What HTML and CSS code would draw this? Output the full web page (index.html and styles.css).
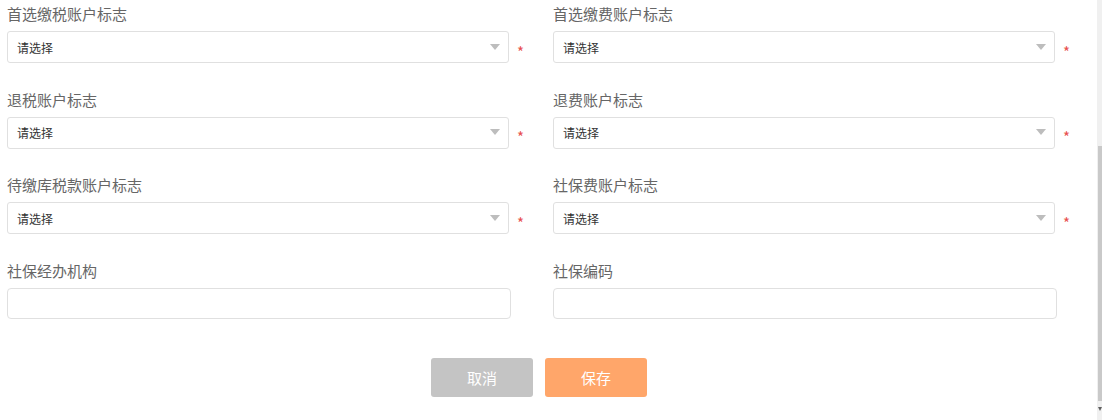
FILE: index.html
```html
<!DOCTYPE html>
<html lang="zh">
<head>
<meta charset="utf-8">
<title>账户标志</title>
<link rel="stylesheet" href="styles.css">
</head>
<body>
<div class="page">
  <form class="form">
    <div class="grid">
      <div class="field">
        <div class="label">首选缴税账户标志</div>
        <div class="control-row">
          <div class="select"><span>请选择</span><i class="arrow"></i></div>
          <span class="req">*</span>
        </div>
      </div>
      <div class="field">
        <div class="label">首选缴费账户标志</div>
        <div class="control-row">
          <div class="select"><span>请选择</span><i class="arrow"></i></div>
          <span class="req">*</span>
        </div>
      </div>
      <div class="field">
        <div class="label">退税账户标志</div>
        <div class="control-row">
          <div class="select"><span>请选择</span><i class="arrow"></i></div>
          <span class="req">*</span>
        </div>
      </div>
      <div class="field">
        <div class="label">退费账户标志</div>
        <div class="control-row">
          <div class="select"><span>请选择</span><i class="arrow"></i></div>
          <span class="req">*</span>
        </div>
      </div>
      <div class="field">
        <div class="label">待缴库税款账户标志</div>
        <div class="control-row">
          <div class="select"><span>请选择</span><i class="arrow"></i></div>
          <span class="req">*</span>
        </div>
      </div>
      <div class="field">
        <div class="label">社保费账户标志</div>
        <div class="control-row">
          <div class="select"><span>请选择</span><i class="arrow"></i></div>
          <span class="req">*</span>
        </div>
      </div>
      <div class="field">
        <div class="label">社保经办机构</div>
        <div class="control-row">
          <input class="input" type="text">
        </div>
      </div>
      <div class="field">
        <div class="label">社保编码</div>
        <div class="control-row">
          <input class="input" type="text">
        </div>
      </div>
    </div>
    <div class="actions">
      <button type="button" class="btn btn-cancel">取消</button>
      <button type="button" class="btn btn-save">保存</button>
    </div>
  </form>
  <div class="scrollbar"><div class="thumb"></div><div class="down"></div></div>
</div>
</body>
</html>
```
FILE: styles.css
```css
html, body {
  margin: 0;
  padding: 0;
  background: #fff;
}
body {
  font-family: "Noto Sans CJK SC", "Liberation Sans", sans-serif;
  width: 1102px;
  height: 420px;
  overflow: hidden;
}
.page {
  position: relative;
  width: 1102px;
  height: 420px;
}
.form {
  padding: 4px 0 0 7px;
}
.grid {
  display: grid;
  grid-template-columns: 546px 546px;
}
.field {
  height: 85.5px;
}
.label {
  height: 20px;
  line-height: 20px;
  font-size: 15px;
  color: #666;
  margin-bottom: 7px;
}
.control-row {
  display: flex;
  align-items: center;
}
.select {
  box-sizing: border-box;
  width: 502px;
  height: 32px;
  border: 1px solid #e0e0e0;
  border-radius: 3px;
  display: flex;
  align-items: center;
  justify-content: space-between;
  padding: 0 8px 0 9px;
  font-size: 12px;
  color: #333;
}
.arrow {
  width: 0;
  height: 0;
  border-left: 5.5px solid transparent;
  border-right: 5.5px solid transparent;
  border-top: 6px solid #bdbdbd;
  margin-top: -1px;
}
.req {
  color: #e84f4f;
  font-size: 15px;
  margin-left: 8px;
  margin-top: 8px;
  line-height: 1;
}
.input {
  box-sizing: border-box;
  width: 504px;
  height: 31px;
  border: 1px solid #e0e0e0;
  border-radius: 4px;
  margin: 0;
  outline: none;
}
.actions {
  display: flex;
  justify-content: center;
  gap: 12px;
  padding-right: 31px;
  margin-top: 12px;
}
.btn {
  width: 102px;
  height: 39px;
  border: none;
  border-radius: 3px;
  color: #fff;
  font-size: 15px;
  font-family: "Noto Sans CJK SC", "Liberation Sans", sans-serif;
  padding: 0;
}
.btn-cancel {
  background: #c4c4c4;
}
.btn-save {
  background: #ffa66a;
}
.scrollbar {
  position: absolute;
  top: 0;
  right: 0;
  width: 5px;
  height: 420px;
  background: #f0f0f0;
}
.thumb {
  position: absolute;
  top: 146px;
  left: 1px;
  width: 4px;
  height: 255px;
  background: #c9c9c9;
}
.down {
  position: absolute;
  top: 407px;
  left: 1px;
  width: 0;
  height: 0;
  border-left: 2px solid transparent;
  border-right: 2px solid transparent;
  border-top: 4px solid #606060;
}
```
